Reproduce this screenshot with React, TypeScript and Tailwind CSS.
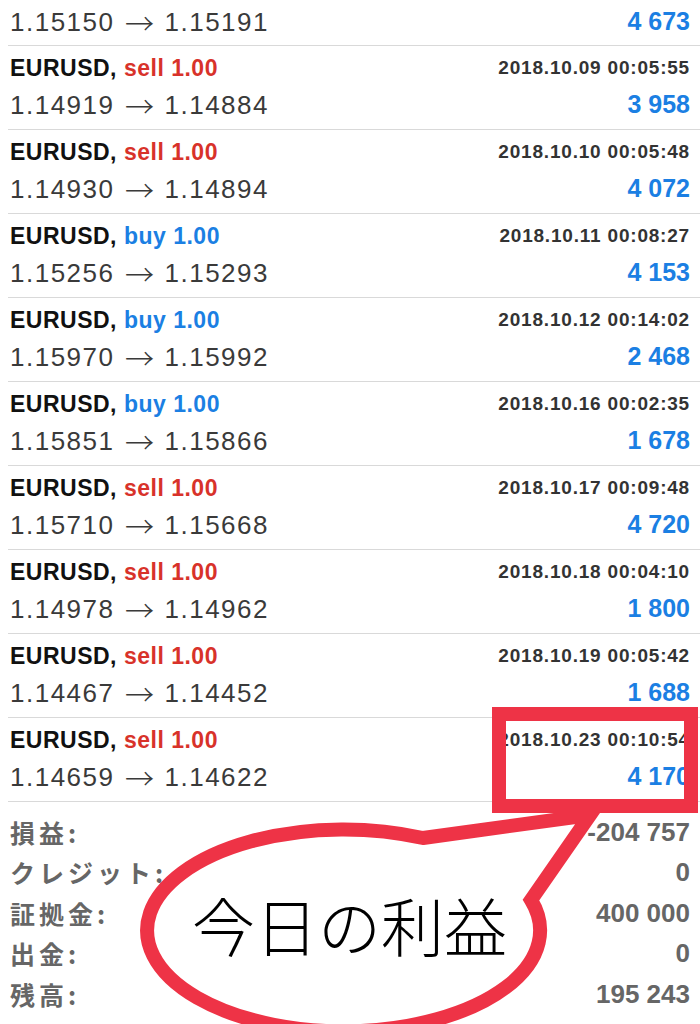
type Deal = {
  side: 'buy' | 'sell';
  time: string;
  open: string;
  close: string;
  profit: string;
};

const deals: Deal[] = [
  { side: 'sell', time: '2018.10.09 00:05:55', open: '1.14919', close: '1.14884', profit: '3 958' },
  { side: 'sell', time: '2018.10.10 00:05:48', open: '1.14930', close: '1.14894', profit: '4 072' },
  { side: 'buy', time: '2018.10.11 00:08:27', open: '1.15256', close: '1.15293', profit: '4 153' },
  { side: 'buy', time: '2018.10.12 00:14:02', open: '1.15970', close: '1.15992', profit: '2 468' },
  { side: 'buy', time: '2018.10.16 00:02:35', open: '1.15851', close: '1.15866', profit: '1 678' },
  { side: 'sell', time: '2018.10.17 00:09:48', open: '1.15710', close: '1.15668', profit: '4 720' },
  { side: 'sell', time: '2018.10.18 00:04:10', open: '1.14978', close: '1.14962', profit: '1 800' },
  { side: 'sell', time: '2018.10.19 00:05:42', open: '1.14467', close: '1.14452', profit: '1 688' },
  { side: 'sell', time: '2018.10.23 00:10:54', open: '1.14659', close: '1.14622', profit: '4 170' },
];

const summary = [
  { label: '損益:', value: '-204 757' },
  { label: 'クレジット:', value: '0' },
  { label: '証拠金:', value: '400 000' },
  { label: '出金:', value: '0' },
  { label: '残高:', value: '195 243' },
];

function PriceLine({ open, close, profit }: { open: string; close: string; profit: string }) {
  return (
    <div className="flex h-[30px] items-center justify-between">
      <div className="flex items-center text-[26px] font-normal text-[#3a3a3a]">
        <span className="tracking-[1.5px]">{open}</span>
        <span className="inline-block w-[50px] text-center font-['Noto_Sans_CJK_JP',sans-serif] text-[29px] font-light leading-none">
          →
        </span>
        <span className="tracking-[1.5px]">{close}</span>
      </div>
      <span className="text-[25px] font-bold text-[#1b7fe3]">{profit}</span>
    </div>
  );
}

function DealRow({ deal }: { deal: Deal }) {
  return (
    <div className="ml-[8px] flex h-[84px] flex-col border-b border-[#d9d9d9] pl-[2px] pr-[10px]">
      <div className="mt-[8px] flex h-[28px] items-center justify-between">
        <span className="text-[23px] font-bold tracking-[0.5px] text-[#111]">
          EURUSD,{' '}
          <span className={deal.side === 'sell' ? 'text-[#d8322a]' : 'text-[#1b7fe3]'}>
            {deal.side} 1.00
          </span>
        </span>
        <span className="text-[19px] font-bold tracking-[0.8px] text-[#333]">{deal.time}</span>
      </div>
      <div className="mt-[8px]">
        <PriceLine open={deal.open} close={deal.close} profit={deal.profit} />
      </div>
    </div>
  );
}

export default function App() {
  return (
    <div className="relative h-[1024px] w-[700px] overflow-hidden bg-white font-['Liberation_Sans','Noto_Sans_CJK_JP',sans-serif]">
      {/* previous deal, cut off at the top */}
      <div className="ml-[8px] h-[46px] border-b border-[#d9d9d9] pl-[2px] pr-[10px] pt-[7px]">
        <PriceLine open="1.15150" close="1.15191" profit="4 673" />
      </div>

      {deals.map((d) => (
        <DealRow key={d.time} deal={d} />
      ))}

      <div className="pl-[10px] pr-[10px] pt-[10px]">
        {summary.map((s) => (
          <div key={s.label} className="flex h-[40.5px] items-center justify-between">
            <span className="font-['Noto_Sans_CJK_JP',sans-serif] text-[25px] font-semibold tracking-[4px] text-[#666]">
              {s.label}
            </span>
            <span className="text-[26px] font-bold text-[#666]">{s.value}</span>
          </div>
        ))}
      </div>

      {/* annotation */}
      <svg className="pointer-events-none absolute left-0 top-0" width="700" height="1024" viewBox="0 0 700 1024">
        <path
          d="M 423 838 L 590 815 L 531 900 A 196.5 101 0 1 1 423 838 Z"
          fill="white"
          stroke="#ee3346"
          strokeWidth="14"
          strokeLinejoin="miter"
        />
        <rect x="499" y="714" width="192" height="92" fill="none" stroke="#ee3346" strokeWidth="14" />
      </svg>
      <div className="absolute left-[192px] top-[892px] whitespace-nowrap font-['Noto_Sans_CJK_JP',sans-serif] text-[63px] font-light leading-none text-black">
        今日の利益
      </div>
    </div>
  );
}
